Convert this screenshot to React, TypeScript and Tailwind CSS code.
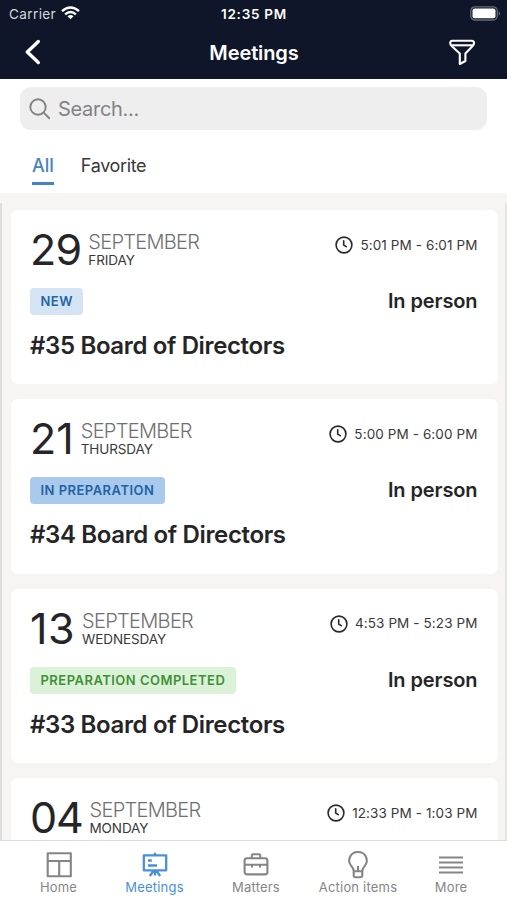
import type { ReactNode } from "react";

interface Meeting {
  day: string;
  dayTracking: string;
  month: string;
  weekday: string;
  time: string;
  details?: { status: string; badge: string; place: string; title: string };
}

const meetings: Meeting[] = [
  {
    day: "29", dayTracking: "tracking-[-0.8px]", month: "SEPTEMBER", weekday: "FRIDAY", time: "5:01 PM - 6:01 PM",
    details: { status: "NEW", badge: "bg-[#d4e4f5] text-[#2366a5]", place: "In person", title: "#35 Board of Directors" },
  },
  {
    day: "21", dayTracking: "tracking-[0px]", month: "SEPTEMBER", weekday: "THURSDAY", time: "5:00 PM - 6:00 PM",
    details: { status: "IN PREPARATION", badge: "bg-[#a9c9ed] text-[#2263a5]", place: "In person", title: "#34 Board of Directors" },
  },
  {
    day: "13", dayTracking: "tracking-[0.5px]", month: "SEPTEMBER", weekday: "WEDNESDAY", time: "4:53 PM - 5:23 PM",
    details: { status: "PREPARATION COMPLETED", badge: "bg-[#dcf2d8] text-[#3f9136]", place: "In person", title: "#33 Board of Directors" },
  },
  { day: "04", dayTracking: "tracking-[-1.2px]", month: "SEPTEMBER", weekday: "MONDAY", time: "12:33 PM - 1:03 PM" },
];

function ClockIcon() {
  return (
    <svg className="h-[18px] w-[18px]" viewBox="0 0 18 18" fill="none" stroke="#29292b" strokeWidth="1.6" strokeLinecap="round" strokeLinejoin="round">
      <circle cx="9" cy="9" r="7.9" />
      <path d="M8.7 4.8V9.1L11.2 10.7" />
    </svg>
  );
}

function MeetingCard({ m }: { m: Meeting }) {
  return (
    <article className="h-[174.3px] shrink-0 rounded-[7px] bg-white pt-[15px] pr-5 pl-[19.5px] text-[#252527]">
      <div className="flex h-[45px] justify-between">
        <div className="flex gap-[7px]">
          <span className={`text-[43px] leading-[48px] ${m.dayTracking}`}>{m.day}</span>
          <div className="flex flex-col pt-[5px]">
            <span className="mt-px h-[21px] text-[20px] leading-[22px] font-light tracking-[-0.7px] text-[#6f6f72]">{m.month}</span>
            <span className="text-[13.5px] leading-4 tracking-[-0.1px] text-[#39393b]">{m.weekday}</span>
          </div>
        </div>
        <div className="flex h-10 items-center gap-[7px]">
          <ClockIcon />
          <span className="text-[13.5px] tracking-[0.1px] text-[#39393b]">{m.time}</span>
        </div>
      </div>
      {m.details && (
        <>
          <div className="mt-[18px] flex h-[27px] items-center justify-between">
            <span className={`rounded-[4px] px-[10.5px] text-[13px] leading-[27px] font-semibold tracking-[0.48px] ${m.details.badge}`}>{m.details.status}</span>
            <span className="text-[20px] leading-[27px] font-semibold tracking-[-0.1px]">{m.details.place}</span>
          </div>
          <h2 className="mt-[15px] text-[24px] leading-8 font-semibold tracking-[-0.36px]">{m.details.title}</h2>
        </>
      )}
    </article>
  );
}

function Tab({ label, width, active = false, children }: { label: string; width: string; active?: boolean; children: ReactNode }) {
  return (
    <button className={`flex flex-col items-center ${width} ${active ? "text-[#4a90d6]" : "text-[#858587]"}`}>
      <svg className="h-[30px] w-[30px]" viewBox="0 0 30 30" fill="none" stroke="currentColor" strokeWidth="2.1" strokeLinejoin="round">
        {children}
      </svg>
      <span className="-mt-px text-[13px] leading-[16px] tracking-[0.2px] whitespace-nowrap">{label}</span>
    </button>
  );
}

export default function App() {
  return (
    <div className="flex h-[900px] w-[507px] flex-col overflow-hidden bg-[#f6f5f3] font-['Inter','Liberation_Sans',sans-serif]">
      <header className="h-[79px] shrink-0 bg-[#101629] text-white">
        <div className="grid h-7 grid-cols-3 items-center pr-[6px] pl-[9px] text-[13.5px]">
          <div className="flex items-center gap-[5px]">
            <span className="tracking-[0.4px] text-[#d6d7dc]">Carrier</span>
            <svg className="-mt-[2px] h-[14px] w-[19px]" viewBox="0 0 19 14" fill="none" stroke="white" strokeWidth="2.4">
              <path d="M1 5.2Q9.5-2.4 18 5.2M4.1 8.4Q9.5 3.6 14.9 8.4" />
              <path d="M9.5 13.2L6.5 10.2Q9.5 7.8 12.5 10.2Z" fill="white" stroke="none" />
            </svg>
          </div>
          <span className="-ml-[2px] text-center font-semibold tracking-[0.75px] whitespace-nowrap">12:35 PM</span>
          <svg className="-mt-[2px] h-[15px] w-[31px] justify-self-end" viewBox="0 0 31 15" fill="none">
            <rect x=".8" y=".8" width="26.4" height="13.2" rx="4" stroke="#666a78" strokeWidth="1.3" />
            <rect x="2.5" y="2.5" width="23" height="9.8" rx="2" fill="white" />
            <path d="M28.7 5Q31.5 7.4 28.7 9.8Z" fill="#666a78" />
          </svg>
        </div>
        <div className="grid h-[48px] grid-cols-3 items-center px-6">
          <svg className="h-7 w-5" viewBox="0 0 20 28" fill="none" stroke="white" strokeWidth="3.4" strokeLinecap="round" strokeLinejoin="round">
            <path d="M14.3 3.5L3.3 14L14.3 24.5" />
          </svg>
          <h1 className="pt-px pl-px text-center text-[20px] font-semibold tracking-[-0.1px]">Meetings</h1>
          <svg className="mr-[8px] h-[26px] w-[26px] justify-self-end" viewBox="0 0 26 26" fill="none" stroke="white" strokeWidth="2.1" strokeLinejoin="round">
            <path d="M3.3 1.8H22.7Q25 1.8 25 4Q25 5.7 23.6 7L16.4 14.5V22L10.8 25V14.5L2.6 7Q1.2 5.7 1.2 4Q1.2 1.8 3.3 1.8Z" />
            <path d="M2 6.3H24" />
          </svg>
        </div>
      </header>

      <section className="h-[114px] shrink-0 bg-white px-5 pt-2">
        <div className="flex h-[43px] w-[467px] items-center gap-[7px] rounded-[11px] bg-[#eeeeef] pl-[9px] text-[#828285]">
          <svg className="h-[22px] w-[22px]" viewBox="0 0 22 22" fill="none" stroke="currentColor" strokeWidth="1.9" strokeLinecap="round">
            <circle cx="9" cy="9" r="7.7" />
            <path d="M14.6 14.6L20.3 20.2" />
          </svg>
          <span className="text-[20px] tracking-[-0.3px]">Search...</span>
        </div>
        <nav className="flex gap-[27px] pt-6 pl-3 text-[18px] leading-6">
          <span className="flex h-[31px] flex-col justify-between font-medium text-[#4584ba]">
            All
            <span className="h-[3px] bg-[#4584ba]" />
          </span>
          <span className="tracking-[-0.35px] text-[#38383a]">Favorite</span>
        </nav>
      </section>

      <main className="flex min-h-0 flex-1 flex-col gap-[15px] overflow-hidden pt-[17px] pr-[9.5px] pl-[10.5px] shadow-[inset_0_10px_0_#f6f5f3,inset_2px_0_0_#dededd,inset_-2px_0_0_#e5e5e3]">
        {meetings.map((m) => <MeetingCard key={m.day} m={m} />)}
      </main>

      <footer className="flex h-[60px] shrink-0 border-t border-[#dcdcdc] bg-white pt-[9px]">
        <Tab label="Home" width="w-[117px]">
          <path d="M3.7 3.2H26.8V26.3H3.7ZM3.7 11H26.8M15.2 11V26.3" />
        </Tab>
        <Tab label="Meetings" width="w-[75px]" active>
          <path d="M3.8 5.3H26.2V20.3H3.8ZM15 2.8V5.3M8 10.5H11.8M8 15.5H17M14 20.3L9.8 26M16 20.3L20.2 26M15 20.3V25.5" strokeWidth="2.3" />
        </Tab>
        <Tab label="Matters" width="w-[128px]">
          <rect x="3.6" y="8.2" width="22.8" height="16.2" rx="2.4" />
          <path d="M10.8 8.2V5.6Q10.8 4.3 12 4.3H18Q19.2 4.3 19.2 5.6V8.2M3.6 14.8H26.4M11 14.8V17.4M19 14.8V17.4" />
        </Tab>
        <Tab label="Action items" width="w-[76px]">
          <path d="M10.7 21.2Q10.7 18.9 8.6 16.4C3.6 10.6 7 2 15 2S26.4 10.6 21.4 16.4Q19.3 18.9 19.3 21.2ZM10.7 21.2V25.2Q10.7 27.2 12.7 27.2H17.3Q19.3 27.2 19.3 25.2V21.2M15 16V21.2" />
        </Tab>
        <Tab label="More" width="w-[110px]">
          <path d="M3 7.5H27M3 12.5H27M3 17.5H27M3 22.5H27" strokeWidth="2.2" />
        </Tab>
      </footer>
    </div>
  );
}
